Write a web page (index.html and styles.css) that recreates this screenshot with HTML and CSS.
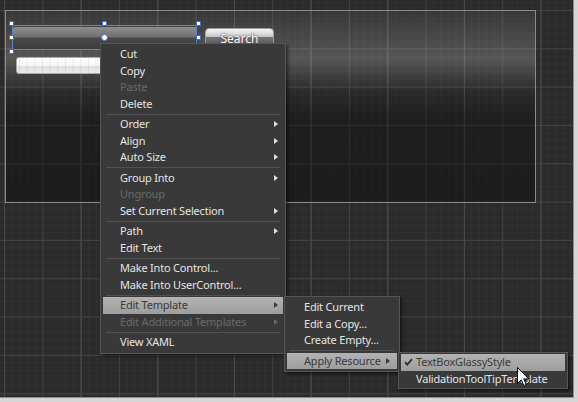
FILE: index.html
```html
<!DOCTYPE html>
<html lang="en">

<head>
    <meta charset="UTF-8">
    <title>Edit Template</title>
    <link rel="stylesheet" href="styles.css">
</head>

<body>
    <div class="canvas">
        <!-- design surface -->
        <div class="artboard">
            <div class="glass-box"></div>
            <div class="search-btn">Search</div>
            <div class="meter"></div>
        </div>

        <!-- selection adorner -->
        <div class="selection">
            <span class="handle h-tl"></span>
            <span class="handle h-tm"></span>
            <span class="handle h-tr"></span>
            <span class="handle h-ml"></span>
            <span class="handle h-mr"></span>
            <span class="handle h-bl"></span>
            <span class="pivot"></span>
        </div>

        <!-- context menu -->
        <div class="menu main-menu">
            <div class="item">Cut</div>
            <div class="item">Copy</div>
            <div class="item off">Paste</div>
            <div class="item">Delete</div>
            <div class="sep"></div>
            <div class="item sub">Order</div>
            <div class="item sub">Align</div>
            <div class="item sub">Auto Size</div>
            <div class="sep"></div>
            <div class="item sub">Group Into</div>
            <div class="item off">Ungroup</div>
            <div class="item sub">Set Current Selection</div>
            <div class="sep"></div>
            <div class="item sub">Path</div>
            <div class="item">Edit Text</div>
            <div class="sep"></div>
            <div class="item">Make Into Control...</div>
            <div class="item">Make Into UserControl...</div>
            <div class="sep"></div>
            <div class="item sub on">Edit Template</div>
            <div class="item sub off">Edit Additional Templates</div>
            <div class="sep"></div>
            <div class="item">View XAML</div>
        </div>

        <div class="menu template-menu">
            <div class="item">Edit Current</div>
            <div class="item">Edit a Copy...</div>
            <div class="item">Create Empty...</div>
            <div class="sep"></div>
            <div class="item sub on">Apply Resource</div>
        </div>

        <div class="menu resource-menu">
            <div class="item on checked">
                <svg class="check" width="9" height="8" viewBox="0 0 9 8">
                    <path d="M1 4.2 L3.3 6.6 L8 1.2" fill="none" stroke="#2e2e2e" stroke-width="1.8" />
                </svg>
                TextBoxGlassyStyle
            </div>
            <div class="item">ValidationToolTipTemplate</div>
        </div>

        <svg class="cursor" width="13" height="20" viewBox="0 0 13 20">
            <path d="M0.5 0.5 L0.5 16.5 L4.3 12.8 L6.8 18.6 L9.2 17.6 L6.7 11.9 L11.7 11.9 Z" fill="#fff" stroke="#000" stroke-width="1" stroke-linejoin="miter" />
        </svg>
    </div>
</body>

</html>
```

FILE: styles.css
```css
* {
    margin: 0;
    padding: 0;
    box-sizing: border-box;
}

body {
    background-color: #d6d6d6;
    width: 578px;
    height: 402px;
    overflow: hidden;
}

.canvas {
    position: relative;
    width: 574px;
    height: 398px;
    border-right: 1px solid #8d8d8d;
    border-bottom: 1px solid #8d8d8d;
    background-color: #2b2b2b;
    background-image:
        linear-gradient(90deg, #4a4a4a 1px, transparent 1px),
        linear-gradient(90deg, #414141 1px, transparent 1px),
        linear-gradient(#434343 1px, transparent 1px),
        linear-gradient(90deg, #313131 1px, transparent 1px),
        linear-gradient(#313131 1px, transparent 1px);
    background-size: 76.67px 100%, 38.33px 100%, 100% 38.33px, 7.667px 100%, 100% 7.667px;
    background-position: 4px 0, 4px 0, 0 10px, 4px 0, 0 10px;
    font-family: "Noto Sans", "Open Sans", sans-serif;
    font-size: 11px;
}

/* ---------- design surface ---------- */

.artboard {
    position: absolute;
    left: 5px;
    top: 10px;
    width: 531px;
    height: 193px;
    border: 1px solid #8b8b8b;
    background: linear-gradient(rgba(255, 255, 255, 0.06) 0%,
            rgba(255, 255, 255, 0.2) 25%,
            rgba(0, 0, 0, 0.02) 42%,
            rgba(0, 0, 0, 0.3) 56%,
            rgba(0, 0, 0, 0.36) 100%);
}

.glass-box {
    position: absolute;
    left: 7px;
    top: 16px;
    width: 184px;
    height: 22px;
    border-radius: 2px;
    background: linear-gradient(#8e8e8e 0%, #717171 45%, #494949 50%, #3d3d3d 100%);
}

.search-btn {
    position: absolute;
    left: 199px;
    top: 17px;
    width: 69px;
    height: 18px;
    border: 1px solid #a0a0a0;
    border-radius: 4px;
    background: linear-gradient(#f4f4f4 0%, #dcdcdc 30%, #c4c4c4 48%, #727272 52%, #5c5c5c 100%);
    color: #fff;
    text-align: center;
    line-height: 19px;
    font-size: 12px;
    text-shadow: 0 0 2px #333, 1px 0 0 rgba(255, 60, 60, 0.4), -1px 0 0 rgba(60, 150, 255, 0.4);
}

.meter {
    position: absolute;
    left: 10px;
    top: 46px;
    width: 110px;
    height: 17px;
    border-radius: 3px;
    border: 1px solid #a8a8a8;
    background-color: #eee;
    background-image:
        linear-gradient(90deg, rgba(0, 0, 0, 0.07) 1px, transparent 1px),
        linear-gradient(#ffffff 0%, #f6f6f6 50%, #e0e0e0 55%, #ececec 100%);
    background-size: 7.667px 100%, 100% 100%;
    background-position: 2px 0, 0 0;
}

/* ---------- selection adorner ---------- */

.selection {
    position: absolute;
    left: 12px;
    top: 25px;
    width: 185px;
    height: 25px;
    border: 1px solid #5b86d6;
}

.handle {
    position: absolute;
    width: 5px;
    height: 5px;
    background: #fff;
    border: 1px solid #3d6fd0;
}

.h-tl { left: -4px; top: -5px; }
.h-tm { left: 89px; top: -5px; }
.h-tr { left: 183px; top: -5px; }
.h-ml { left: -4px; top: 9px; }
.h-mr { left: 183px; top: 9px; }
.h-bl { left: -4px; top: 23px; }

.pivot {
    position: absolute;
    left: 88px;
    top: 8px;
    width: 7px;
    height: 7px;
    border-radius: 50%;
    background: #fff;
    border: 1px solid #3d6fd0;
}

/* ---------- menus ---------- */

.menu {
    position: absolute;
    background: #393939;
    border: 1px solid #565656;
    padding: 2px;
    box-shadow: 2px 2px 3px rgba(0, 0, 0, 0.55);
    color: #e4e4e4;
    letter-spacing: -0.2px;
}

.main-menu {
    left: 100px;
    top: 43px;
    width: 186px;
}

.template-menu {
    left: 284px;
    top: 296px;
    width: 116px;
}

.resource-menu {
    left: 398px;
    top: 352px;
    width: 170px;
    padding: 1px 2px;
}

.item {
    position: relative;
    height: 16.5px;
    line-height: 16.5px;
    padding-left: 17px;
    white-space: nowrap;
}

.resource-menu .item {
    padding-left: 15px;
}

.item.off {
    color: #6a6a6a;
}

.item.on {
    background: linear-gradient(#b3b3b3, #9d9d9d);
    color: #3b3b3b;
}

.item.sub::after {
    content: "";
    position: absolute;
    right: 5px;
    top: 5px;
    border-left: 4px solid #e0e0e0;
    border-top: 3.5px solid transparent;
    border-bottom: 3.5px solid transparent;
}

.template-menu .item.sub::after {
    right: 7px;
}

.item.on.sub::after {
    border-left-color: #3b3b3b;
}

.item.off.sub::after {
    border-left-color: #6a6a6a;
}

.check {
    position: absolute;
    left: 3px;
    top: 4px;
}

.sep {
    height: 4px;
    display: flex;
    align-items: center;
    padding: 0 3px;
}

.sep::before {
    content: "";
    flex: 1;
    height: 1px;
    background: #505050;
}

.cursor {
    position: absolute;
    left: 517px;
    top: 367px;
}
```
